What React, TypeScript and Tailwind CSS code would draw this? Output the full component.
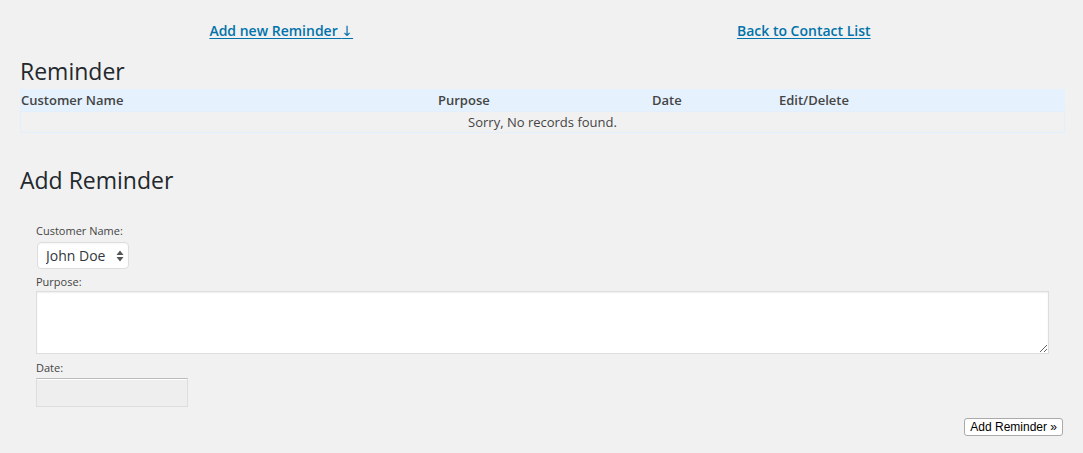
import React from "react";

const cols = "grid grid-cols-[417px_214px_127px_1fr]";

function UpDown() {
  return (
    <svg width="8" height="12" viewBox="0 0 8 12" className="pointer-events-none absolute right-[5px] top-[8px]">
      <path d="M4 0.5 L7.5 5 L0.5 5 Z" fill="#555" />
      <path d="M4 11.5 L7.5 7 L0.5 7 Z" fill="#555" />
    </svg>
  );
}

export default function App() {
  return (
    <div className="min-h-screen bg-[#f1f1f1] pl-5 pr-[18px] font-['Open_Sans',sans-serif] text-[#444]">
      {/* top links */}
      <div className="grid grid-cols-2 pt-5 text-center text-sm font-semibold leading-[22px]">
        <div>
          <a href="#add" className="text-[#0073aa] underline underline-offset-2">Add new Reminder <span className="font-['DejaVu_Sans',sans-serif] font-normal">↓</span></a>
        </div>
        <div>
          <a href="#back" className="text-[#0073aa] underline underline-offset-2">Back to Contact List</a>
        </div>
      </div>

      <h2 className="mt-[14px] text-[23px] leading-[30px] font-normal text-[#23282d]">Reminder</h2>

      {/* table */}
      <div className="mt-[3px] text-[13px]">
        <div className={`${cols} h-[22px] bg-[#e5f1fd] pl-[1px] font-semibold leading-[22px] text-[#444]`}>
          <div>Customer Name</div>
          <div>Purpose</div>
          <div>Date</div>
          <div>Edit/Delete</div>
        </div>
        <div className="h-[22px] border border-[#e3effc] text-center leading-[20px] text-[#444]">
          Sorry, No records found.
        </div>
      </div>

      <h2 className="mt-[32px] text-[23px] leading-[30px] font-normal text-[#23282d]">Add Reminder</h2>

      {/* form */}
      <form className="mt-[28px] pl-4 text-[11px] text-[#444]">
        <label className="block leading-4">Customer Name:</label>
        <div className="relative mt-[3px] ml-[1px] w-[92px]">
          <select className="h-[27px] w-[92px] appearance-none rounded-[4px] border border-[#ddd] bg-white pl-[8px] text-sm text-[#32373c] shadow-[inset_0_1px_2px_rgba(0,0,0,0.04)] outline-none">
            <option>John Doe</option>
          </select>
          <UpDown />
        </div>

        <label className="mt-[5px] block leading-4">Purpose:</label>
        <textarea className="mt-[1px] block h-[63px] w-[1013px] border border-[#ddd] bg-white shadow-[inset_0_1px_2px_rgba(0,0,0,0.07)] outline-none" />

        <label className="mt-[6px] block leading-4">Date:</label>
        <input
          type="text"
          disabled
          className="mt-[2px] block h-[29px] w-[152px] border border-[#ddd] border-t-[#bbb] bg-[#eee] shadow-[inset_0_1px_0_#fff]"
        />

        <div className="mt-[11px] flex justify-end pr-[2px]">
          <button
            type="button"
            className="h-[18px] rounded-[3px] border border-[#aaa] bg-white px-[5px] font-['Liberation_Sans',sans-serif] text-[12px] leading-[16px] text-black"
          >
            Add Reminder »
          </button>
        </div>
      </form>
    </div>
  );
}
